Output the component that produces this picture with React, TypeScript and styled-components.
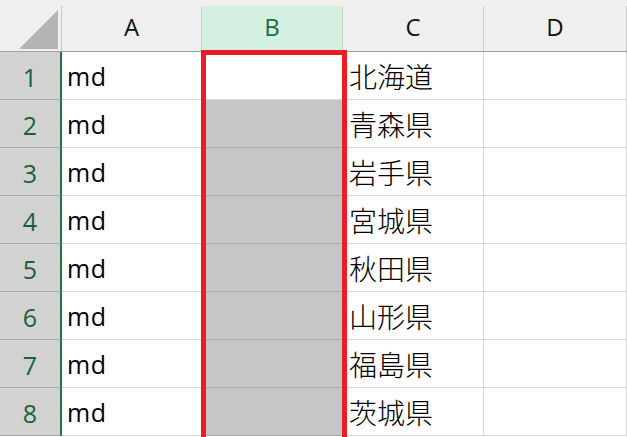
import { Fragment } from 'react'
import styled, { createGlobalStyle } from 'styled-components'

const GlobalStyle = createGlobalStyle`
  body {
    margin: 0;
    background: #ffffff;
    overflow: hidden;
  }
`

const COLUMNS = ['A', 'B', 'C', 'D']
const PREFS = ['北海道', '青森県', '岩手県', '宮城県', '秋田県', '山形県', '福島県', '茨城県']
const GRID = '62px 140px 141px 141px 143px'

const Sheet = styled.div`
  position: relative;
  width: 627px;
  height: 437px;
  overflow: hidden;
  font-family: 'Open Sans', 'Noto Sans CJK JP', sans-serif;
`

const HeaderRow = styled.div`
  display: grid;
  grid-template-columns: ${GRID};
  height: 52px;
  box-sizing: border-box;
  padding-top: 6px;
  background: #efefef;
  border-bottom: 1px solid #a0a0a0;
`

const Corner = styled.div`
  display: flex;
  align-items: flex-end;
  justify-content: flex-end;
  padding: 0 3px 2px 0;
  border-right: 1px solid #c6c6c6;
`

const ColHead = styled.div<{ $active?: boolean }>`
  display: flex;
  align-items: center;
  justify-content: center;
  padding-bottom: 5px;
  border-right: 1px solid #cdcdcd;
  background: ${(p) => (p.$active ? '#d3f0e0' : 'transparent')};
  color: ${(p) => (p.$active ? '#1e6b41' : '#111111')};
  font-size: 24px;
`

const Body = styled.div`
  display: grid;
  grid-template-columns: ${GRID};
  grid-auto-rows: 48px;
`

const RowHead = styled.div`
  display: flex;
  align-items: center;
  justify-content: center;
  padding-top: 3px;
  box-sizing: border-box;
  background: #d2d2d2;
  border-bottom: 1px solid #a9a9a9;
  border-right: 2px solid #217346;
  color: #1d6038;
  font-size: 25px;
`

const Cell = styled.div<{ $selected?: boolean; $jp?: boolean }>`
  display: flex;
  align-items: center;
  padding-left: ${(p) => (p.$jp ? '6px' : '5px')};
  box-sizing: border-box;
  background: ${(p) => (p.$selected ? '#c6c6c6' : '#ffffff')};
  border-right: 1px solid ${(p) => (p.$selected ? '#acacac' : '#dadada')};
  border-bottom: 1px solid ${(p) => (p.$selected ? '#acacac' : '#dadada')};
  color: #000000;
  font-size: ${(p) => (p.$jp ? '28px' : '25px')};
  font-weight: ${(p) => (p.$jp ? 300 : 400)};
  letter-spacing: ${(p) => (p.$jp ? '0' : '0.5px')};
  white-space: nowrap;
`

const Highlight = styled.div`
  position: absolute;
  left: 201px;
  top: 50px;
  width: 146px;
  height: 420px;
  box-sizing: border-box;
  border: 5px solid #ed1c24;
  pointer-events: none;
`

const App = () => {
  return (
    <Sheet>
      <GlobalStyle />
      <HeaderRow>
        <Corner>
          <svg width="39" height="39" viewBox="0 0 39 39">
            <polygon points="39,0 39,39 0,39" fill="#b4b4b4" />
          </svg>
        </Corner>
        {COLUMNS.map((c) => (
          <ColHead key={c} $active={c === 'B'}>
            {c}
          </ColHead>
        ))}
      </HeaderRow>
      <Body>
        {PREFS.map((pref, i) => (
          <Fragment key={pref}>
            <RowHead>{i + 1}</RowHead>
            <Cell>md</Cell>
            <Cell $selected={i > 0} />
            <Cell $jp>{pref}</Cell>
            <Cell />
          </Fragment>
        ))}
      </Body>
      <Highlight />
    </Sheet>
  )
}

export default App
